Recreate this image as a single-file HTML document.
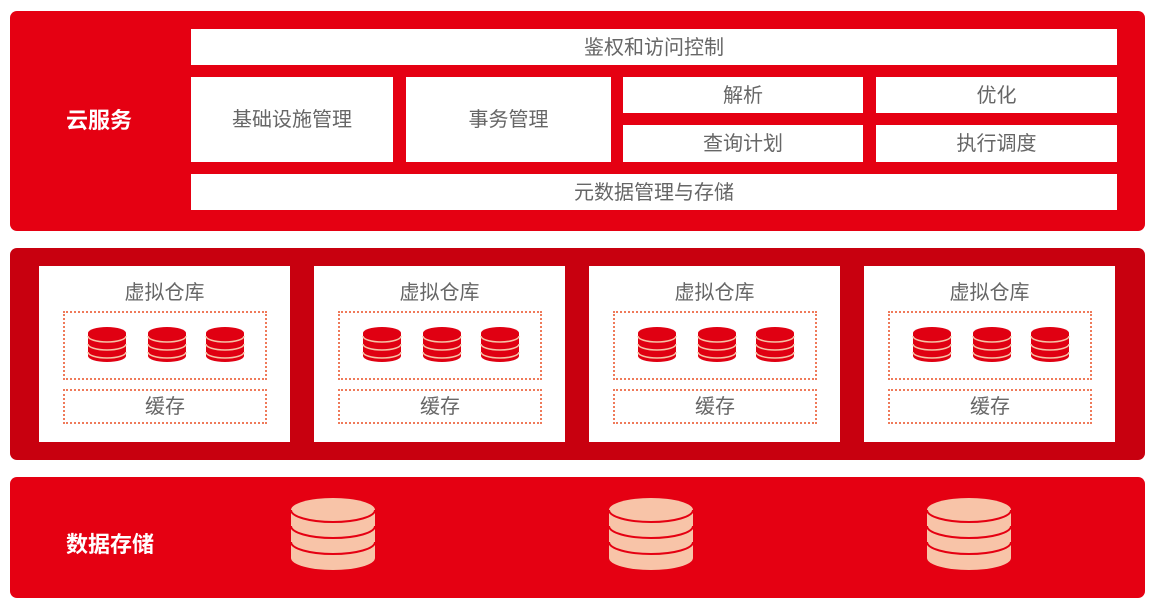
<!DOCTYPE html>
<html><head><meta charset="utf-8"><style>
*{margin:0;padding:0;box-sizing:border-box}
body{width:1156px;height:610px;background:#fff;position:relative;overflow:hidden;font-family:"Liberation Sans","Noto Sans CJK SC",sans-serif}
.a{position:absolute}
.p{background:#e50012;border-radius:7px}
.w{background:#fff;color:#666;font-size:20px;display:flex;align-items:center;justify-content:center;padding-bottom:4px}
.lbl{color:#fff;font-size:22px;font-weight:bold}
.card{background:#fff;width:251px;height:176px;top:266px}
.card .t{position:absolute;top:10px;left:0;width:100%;text-align:center;font-size:20px;color:#666}
.dot{position:absolute;left:24px;width:204px;border:2px dotted #ef7a5a}
.card svg{position:absolute;top:60px}
</style></head><body>
<div class="a p" style="left:10px;top:11px;width:1135px;height:220px"></div>
<div class="a lbl" style="left:66px;top:103px">云服务</div>
<div class="a w" style="left:191px;top:29px;width:926px;height:36px">鉴权和访问控制</div>
<div class="a w" style="left:191px;top:77px;width:202px;height:85px">基础设施管理</div>
<div class="a w" style="left:406px;top:77px;width:205px;height:85px">事务管理</div>
<div class="a w" style="left:623px;top:77px;width:240px;height:36px">解析</div>
<div class="a w" style="left:623px;top:125px;width:240px;height:37px">查询计划</div>
<div class="a w" style="left:876px;top:77px;width:241px;height:36px">优化</div>
<div class="a w" style="left:876px;top:125px;width:241px;height:37px">执行调度</div>
<div class="a w" style="left:191px;top:174px;width:926px;height:36px">元数据管理与存储</div>

<div class="a" style="left:10px;top:248px;width:1135px;height:212px;background:#c8000f;border-radius:7px"></div>

<svg width="0" height="0" style="position:absolute"><defs>
<g id="db"><path d="M1 7 V30 A19 6 0 0 0 39 30 V7 Z" fill="#e00012"/><ellipse cx="20" cy="7" rx="19" ry="6" fill="#e00012"/>
<path d="M1 10 A19 6 0 0 0 39 10 M1 18 A19 6 0 0 0 39 18 M1 26 A19 6 0 0 0 39 26" fill="none" stroke="#f6c2a6" stroke-width="1.5"/></g>
<g id="big"><path d="M1 14 V62 A42 12 0 0 0 85 62 V14 Z" fill="#f8c4a8"/><ellipse cx="43" cy="14" rx="42" ry="12" fill="#f8c4a8"/>
<path d="M1 14 A42 12 0 0 0 85 14 M1 30 A42 12 0 0 0 85 30 M1 46 A42 12 0 0 0 85 46" fill="none" stroke="#e50012" stroke-width="2"/></g>
</defs></svg>

<div class="a card" style="left:39px"><div class="t">虚拟仓库</div><div class="dot" style="top:45px;height:69px"></div><div class="dot w" style="top:123px;height:35px;font-size:20px;background:none">缓存</div>
<svg style="left:48px" width="40" height="38"><use href="#db"/></svg><svg style="left:108px" width="40" height="38"><use href="#db"/></svg><svg style="left:166px" width="40" height="38"><use href="#db"/></svg></div>
<div class="a card" style="left:314px"><div class="t">虚拟仓库</div><div class="dot" style="top:45px;height:69px"></div><div class="dot w" style="top:123px;height:35px;font-size:20px;background:none">缓存</div>
<svg style="left:48px" width="40" height="38"><use href="#db"/></svg><svg style="left:108px" width="40" height="38"><use href="#db"/></svg><svg style="left:166px" width="40" height="38"><use href="#db"/></svg></div>
<div class="a card" style="left:589px"><div class="t">虚拟仓库</div><div class="dot" style="top:45px;height:69px"></div><div class="dot w" style="top:123px;height:35px;font-size:20px;background:none">缓存</div>
<svg style="left:48px" width="40" height="38"><use href="#db"/></svg><svg style="left:108px" width="40" height="38"><use href="#db"/></svg><svg style="left:166px" width="40" height="38"><use href="#db"/></svg></div>
<div class="a card" style="left:864px"><div class="t">虚拟仓库</div><div class="dot" style="top:45px;height:69px"></div><div class="dot w" style="top:123px;height:35px;font-size:20px;background:none">缓存</div>
<svg style="left:48px" width="40" height="38"><use href="#db"/></svg><svg style="left:108px" width="40" height="38"><use href="#db"/></svg><svg style="left:166px" width="40" height="38"><use href="#db"/></svg></div>

<div class="a p" style="left:10px;top:477px;width:1135px;height:121px"></div>
<div class="a lbl" style="left:66px;top:527px">数据存储</div>
<svg class="a" style="left:290px;top:496px" width="88" height="78"><use href="#big"/></svg>
<svg class="a" style="left:608px;top:496px" width="88" height="78"><use href="#big"/></svg>
<svg class="a" style="left:926px;top:496px" width="88" height="78"><use href="#big"/></svg>
</body></html>
